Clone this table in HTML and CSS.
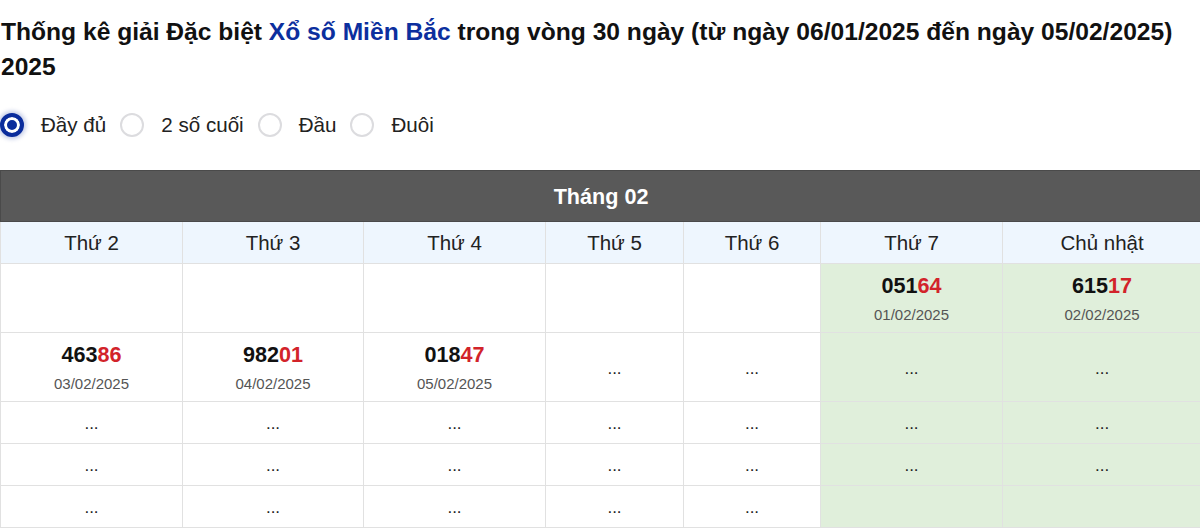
FILE: index.html
```html
<!DOCTYPE html>
<html lang="vi">
<head>
<meta charset="utf-8">
<title>Thống kê giải Đặc biệt</title>
<link rel="stylesheet" href="styles.css">
</head>
<body>
<h2 class="title">Thống kê giải Đặc biệt <a class="hl" href="#">Xổ số Miền Bắc</a> trong vòng 30 ngày (từ ngày 06/01/2025 đến ngày 05/02/2025) 2025</h2>
<div class="radios">
  <label class="opt"><input type="radio" name="m" class="rad" checked><span>Đầy đủ</span></label>
  <label class="opt"><input type="radio" name="m" class="rad"><span>2 số cuối</span></label>
  <label class="opt"><input type="radio" name="m" class="rad"><span>Đầu</span></label>
  <label class="opt"><input type="radio" name="m" class="rad"><span>Đuôi</span></label>
</div>
<table class="cal">
  <colgroup>
    <col class="c1"><col class="c2"><col class="c3"><col class="c4"><col class="c5"><col class="c6"><col class="c7">
  </colgroup>
  <thead>
    <tr><th colspan="7" class="month">Tháng 02</th></tr>
    <tr class="days">
      <th>Thứ 2</th><th>Thứ 3</th><th>Thứ 4</th><th>Thứ 5</th><th>Thứ 6</th><th>Thứ 7</th><th>Chủ nhật</th>
    </tr>
  </thead>
  <tbody>
    <tr class="tall">
      <td></td><td></td><td></td><td></td><td></td>
      <td class="wk"><div class="num">051<span class="red">64</span></div><div class="date">01/02/2025</div></td>
      <td class="wk"><div class="num">615<span class="red">17</span></div><div class="date">02/02/2025</div></td>
    </tr>
    <tr class="tall">
      <td><div class="num">463<span class="red">86</span></div><div class="date">03/02/2025</div></td>
      <td><div class="num">982<span class="red">01</span></div><div class="date">04/02/2025</div></td>
      <td><div class="num">018<span class="red">47</span></div><div class="date">05/02/2025</div></td>
      <td class="dots">...</td><td class="dots">...</td>
      <td class="wk dots">...</td><td class="wk dots">...</td>
    </tr>
    <tr class="short">
      <td class="dots">...</td><td class="dots">...</td><td class="dots">...</td><td class="dots">...</td><td class="dots">...</td>
      <td class="wk dots">...</td><td class="wk dots">...</td>
    </tr>
    <tr class="short">
      <td class="dots">...</td><td class="dots">...</td><td class="dots">...</td><td class="dots">...</td><td class="dots">...</td>
      <td class="wk dots">...</td><td class="wk dots">...</td>
    </tr>
    <tr class="short">
      <td class="dots">...</td><td class="dots">...</td><td class="dots">...</td><td class="dots">...</td><td class="dots">...</td>
      <td class="wk"></td><td class="wk"></td>
    </tr>
  </tbody>
</table>
</body>
</html>
```
FILE: styles.css
```css
html, body {
  margin: 0;
  padding: 0;
  background: #fff;
  font-family: "Liberation Sans", Arial, sans-serif;
  color: #000;
}
.title {
  margin: 14px 0 0 1px;
  font-size: 24.6px;
  line-height: 35px;
  font-weight: bold;
  color: #111;
}
.hl {
  color: #0c2f9e;
  text-decoration: none;
}
.radios {
  display: flex;
  align-items: center;
  margin-top: 26px;
  height: 30px;
}
.opt {
  display: flex;
  align-items: center;
  font-size: 20.6px;
  color: #222;
  margin-right: 14px;
}
.opt span {
  margin-left: 17px;
}
.rad {
  -webkit-appearance: none;
  appearance: none;
  margin: 0;
  width: 24px;
  height: 24px;
  border-radius: 50%;
  border: 2px solid #dcdcdf;
  background: #fff;
  box-sizing: border-box;
}
.rad:checked {
  border: 4px solid #0a2c9c;
  background: #0a2c9c;
  box-shadow: inset 0 0 0 3px #fff, 0 0 4px 2px rgba(10, 44, 156, 0.25);
}
.cal {
  margin-top: 30px;
  border-collapse: collapse;
  table-layout: fixed;
  width: 1201px;
}
.c1 { width: 182px; }
.c2 { width: 181px; }
.c3 { width: 182px; }
.c4 { width: 138px; }
.c5 { width: 137px; }
.c6 { width: 182px; }
.c7 { width: 199px; }
.cal th, .cal td {
  border: 1px solid #e1e1e1;
  text-align: center;
  padding: 0;
}
.month {
  background: #595959;
  color: #fff;
  font-size: 21.6px;
  font-weight: bold;
  height: 48px;
  border: 1px solid #4a4a4a !important;
  padding-top: 2px !important;
}
.days th {
  background: #eef6fe;
  font-weight: normal;
  font-size: 20.5px;
  color: #222;
  height: 41px;
}
.tall td { height: 69px; padding-top: 1px; box-sizing: border-box; }
.short td { height: 42px; padding-top: 3px; box-sizing: border-box; }
.wk { background: #e0efdb; }
.dots.wk, .tall .dots { padding-top: 3px; }
.num {
  font-size: 21.6px;
  font-weight: bold;
  color: #111;
  line-height: 24px;
}
.red { color: #d2232a; }
.date {
  font-size: 15px;
  color: #555;
  margin-top: 8px;
  line-height: 18px;
}
.dots {
  font-size: 17px;
  color: #222;
}
```
